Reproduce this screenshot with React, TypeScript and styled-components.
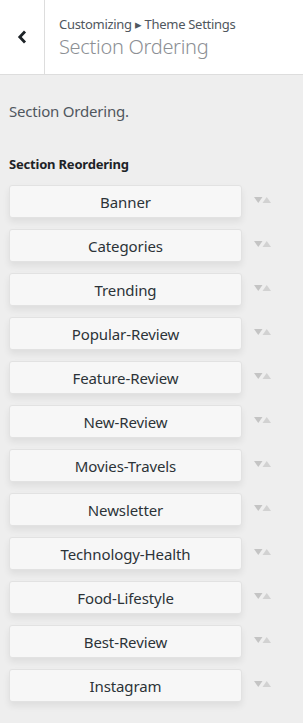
import React from "react";
import styled, { createGlobalStyle } from "styled-components";

const sections = [
  "Banner",
  "Categories",
  "Trending",
  "Popular-Review",
  "Feature-Review",
  "New-Review",
  "Movies-Travels",
  "Newsletter",
  "Technology-Health",
  "Food-Lifestyle",
  "Best-Review",
  "Instagram",
];

const GlobalStyle = createGlobalStyle`
  html, body {
    margin: 0;
    padding: 0;
    background: #eeeeee;
    font-family: "Noto Sans", "Open Sans", sans-serif;
  }
`;

const App = () => {
  return (
    <Panel>
      <GlobalStyle />
      <Header>
        <BackButton aria-label="Back">
          <svg width="12" height="16" viewBox="0 0 12 16">
            <path d="M9 2.5 L3.8 8 L9 13.5" fill="none" stroke="#1d2327" strokeWidth="2.8" />
          </svg>
        </BackButton>
        <HeaderTitle>
          <Crumb>Customizing ▸ Theme Settings</Crumb>
          <Title>Section Ordering</Title>
        </HeaderTitle>
      </Header>

      <Content>
        <Description>Section Ordering.</Description>
        <Label>Section Reordering</Label>
        <List>
          {sections.map((name) => (
            <Row key={name}>
              <Item>{name}</Item>
              <Arrows>
                <svg width="18" height="8" viewBox="0 0 18 8">
                  <polygon points="0,1 8.5,1 4.25,7" fill="#c4c4c4" />
                  <polygon points="8.5,7 17,7 12.75,1" fill="#d2d2d2" />
                </svg>
              </Arrows>
            </Row>
          ))}
        </List>
      </Content>
    </Panel>
  );
};

const Panel = styled.div`
  width: 303px;
  min-height: 723px;
  background: #eeeeee;
`;

const Header = styled.div`
  display: flex;
  height: 74px;
  background: #fff;
  border-bottom: 1px solid #dddddd;
`;

const BackButton = styled.div`
  width: 44px;
  flex-shrink: 0;
  display: flex;
  align-items: center;
  justify-content: center;
  border-right: 1px solid #dddddd;
`;

const HeaderTitle = styled.div`
  display: flex;
  flex-direction: column;
  justify-content: center;
  padding-left: 14px;
  padding-top: 1px;
`;

const Crumb = styled.span`
  font-size: 13px;
  line-height: 18px;
  color: #50575e;
  letter-spacing: -0.3px;
`;

const Title = styled.span`
  font-size: 20px;
  line-height: 27px;
  font-weight: 300;
  color: #8c8f94;
  letter-spacing: -0.3px;
`;

const Content = styled.div`
  padding: 22px 0 0 9px;
`;

const Description = styled.p`
  margin: 0;
  font-size: 15px;
  line-height: 28px;
  color: #50575e;
  letter-spacing: -0.2px;
`;

const Label = styled.div`
  margin-top: 30px;
  font-size: 13px;
  line-height: 18px;
  font-weight: 700;
  color: #1d2327;
  letter-spacing: -0.2px;
`;

const List = styled.div`
  display: flex;
  flex-direction: column;
  gap: 11px;
  margin-top: 12px;
`;

const Row = styled.div`
  display: flex;
  align-items: center;
`;

const Item = styled.div`
  width: 231px;
  height: 31px;
  display: flex;
  align-items: center;
  justify-content: center;
  background: #f7f7f7;
  border: 1px solid #e2e2e2;
  border-radius: 3px;
  box-shadow: 0 4px 7px rgba(0, 0, 0, 0.07);
  font-size: 15px;
  color: #2c3338;
  letter-spacing: -0.1px;
`;

const Arrows = styled.div`
  display: flex;
  margin-left: 12px;
  margin-top: -4px;
`;

export default App;
